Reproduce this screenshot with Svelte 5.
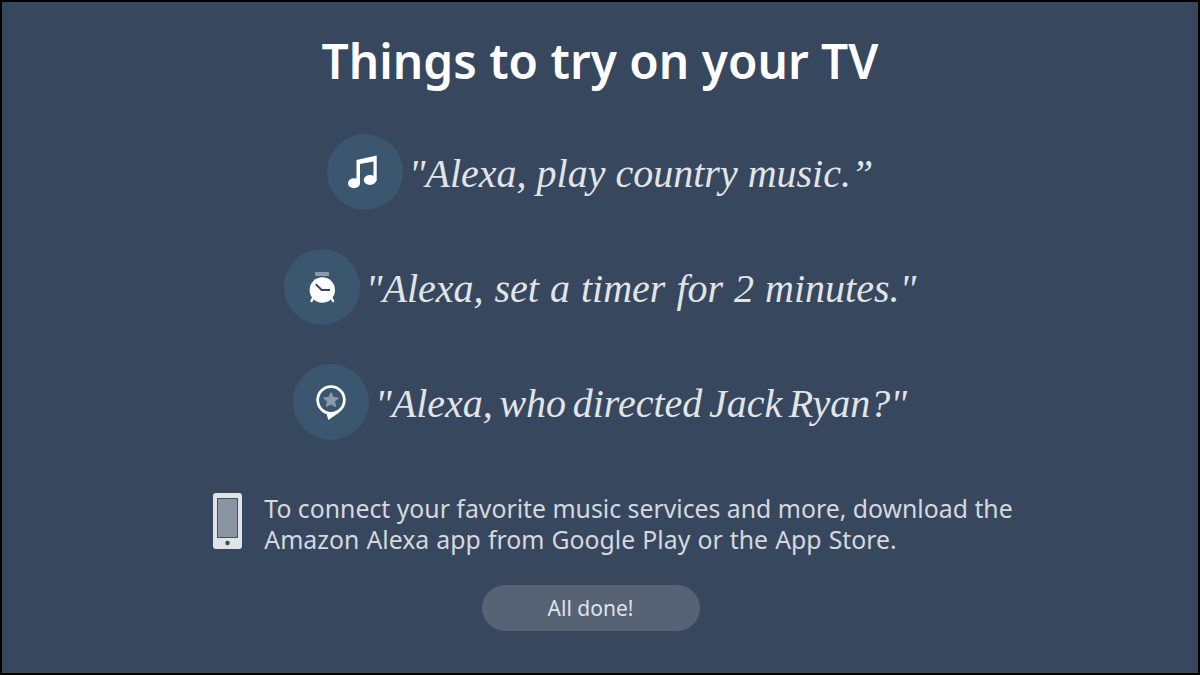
<script>
    const tips = [
        { icon: 'music', text: '"Alexa, play country music.”' },
        { icon: 'timer', text: '"Alexa, set a timer for 2 minutes."' },
        { icon: 'star', text: '"Alexa, who directed Jack Ryan?"' }
    ];
</script>

<div class="screen">
    <h1>Things to try on your TV</h1>

    {#each tips as tip}
        <div class="tip {tip.icon}">
            <span class="badge">
                <svg width="76" height="76" viewBox="0 0 76 76">
                    {#if tip.icon == 'music'}
                        <path d="M29.5 26 L49.7 21.5 V47 H46.5 V27.5 L33 30 V50 H29.5 Z" fill="#fff"/>
                        <ellipse cx="27" cy="49.3" rx="6" ry="5" fill="#fff"/>
                        <ellipse cx="43" cy="46" rx="6.2" ry="5" fill="#fff"/>
                    {:else if tip.icon == 'timer'}
                        <rect x="31" y="23" width="14" height="4" rx="1" fill="#8b9bab"/>
                        <path d="M30 47 L27.5 52 M46.5 47 L49 52" stroke="#fff" stroke-width="2.4" stroke-linecap="round"/>
                        <circle cx="38.3" cy="41" r="12.7" fill="#fff"/>
                        <path d="M31.7 35.3 L37.7 41 H46" fill="none" stroke="#37475e" stroke-width="2"/>
                    {:else}
                        <path d="M33.5 49.5 L35.3 56 L45.5 49 Z" fill="#fff"/>
                        <circle cx="38" cy="36" r="13.3" fill="#3b566f" stroke="#fff" stroke-width="2.8"/>
                        <path d="M38 28.5 L40.2 33.4 L45.4 34 L41.5 37.5 L42.6 42.6 L38 40 L33.4 42.6 L34.5 37.5 L30.6 34 L35.8 33.4 Z" fill="#8b9bab" stroke="#8b9bab" stroke-width="1" stroke-linejoin="round"/>
                    {/if}
                </svg>
            </span>
            <span class="say">{tip.text}</span>
        </div>
    {/each}

    <div class="note">
        <svg width="29" height="56" viewBox="0 0 29 56">
            <rect width="29" height="56" rx="3" fill="#dfe2e6"/>
            <rect x="4.5" y="5.5" width="20" height="39" fill="#8a95a2" stroke="#3f5064" stroke-width="1"/>
            <circle cx="14.5" cy="50" r="2.2" fill="#37475e"/>
        </svg>
        <p>To connect your favorite music services and more, download the<br/><span class="second">Amazon Alexa app from Google Play or the App Store.</span></p>
    </div>

    <button>All done!</button>
</div>

<style>
:global(body) {
    margin: 0;
}

.screen {
    width: 1200px;
    height: 675px;
    box-sizing: border-box;
    border: 2px solid #000;
    background: #37475e;
    display: flex;
    flex-direction: column;
    align-items: center;
    overflow: hidden;
    font-family: "Noto Sans", sans-serif;
}

h1 {
    margin: 28px 0 0;
    font-size: 47.8px;
    line-height: 62px;
    font-weight: 600;
    color: #fff;
}

.tip {
    display: flex;
    align-items: center;
    gap: 6px;
    height: 76px;
    margin-top: 39px;
}

.tip.music {
    margin-top: 42px;
}

.badge {
    width: 76px;
    height: 76px;
    border-radius: 50%;
    background: #3b566f;
    display: flex;
}

.say {
    font-family: "Liberation Serif", serif;
    font-style: italic;
    font-size: 40px;
    color: #e2e5e8;
    padding-top: 2px;
}

.timer .say {
    word-spacing: 1px;
}

.star .say {
    word-spacing: -3.4px;
}

.note {
    display: flex;
    align-items: flex-start;
    gap: 22px;
    margin-top: 53px;
    margin-left: 26px;
    color: #d5d8dd;
}

.note p {
    margin: 0;
    font-size: 24.8px;
    line-height: 31px;
}

.second {
    word-spacing: 0.7px;
}

button {
    width: 218px;
    height: 46px;
    margin-top: 30px;
    margin-left: -19px;
    border: none;
    border-radius: 23px;
    background: #566375;
    color: #dfe2e6;
    font-family: inherit;
    font-size: 21px;
}
</style>
